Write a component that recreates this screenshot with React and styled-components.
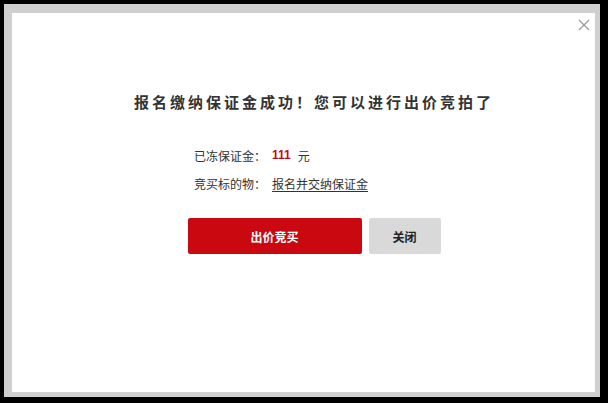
import React from "react";
import styled, { createGlobalStyle } from "styled-components";

const Global = createGlobalStyle`
  html, body { margin: 0; padding: 0; background: #000; }
  body { font-family: "Noto Sans CJK SC", "Liberation Sans", sans-serif; }
  #root { width: 608px; height: 403px; }
`;

const Frame = styled.div`
  box-sizing: border-box;
  position: relative;
  margin: 4px 8px 0 4px;
  width: 596px;
  height: 393px;
  background: #fff;
  border-style: solid;
  border-color: #cfcfcf;
  border-width: 9px 5px 5px 8px;
`;

const Close = styled.button`
  position: absolute;
  top: 4px;
  right: 3px;
  width: 16px;
  height: 16px;
  padding: 0;
  border: 0;
  background: transparent;
  display: flex;
  align-items: center;
  justify-content: center;
  cursor: pointer;
`;

const Content = styled.div`
  display: flex;
  flex-direction: column;
  align-items: center;
  padding: 79px 0 0 21px;
`;

const Title = styled.h2`
  margin: 0;
  font-size: 15px;
  line-height: 20px;
  font-weight: 700;
  letter-spacing: 3px;
  color: #333;
  white-space: nowrap;
`;

const Info = styled.div`
  width: 240px;
  margin-top: 29px;
  display: flex;
  flex-direction: column;
`;

const Row = styled.div`
  display: flex;
  align-items: center;
  height: 28px;
  font-size: 12px;
  color: #333;
  white-space: nowrap;
`;

const Price = styled.span`
  color: #c0091a;
  font-weight: 700;
  font-size: 12px;
  font-family: "Liberation Sans", sans-serif;
  margin: 0 7px 0 6px;
`;

const Link = styled.a`
  color: #333;
  margin-left: 6px;
  text-decoration: underline;
  text-underline-offset: 2px;
`;

const Buttons = styled.div`
  display: flex;
  gap: 7px;
  margin-top: 21px;
`;

const Button = styled.button`
  height: 36px;
  width: ${(p) => p.$w}px;
  border: 0;
  border-radius: 2px;
  font-family: "Noto Sans CJK SC", sans-serif;
  font-size: 12px;
  font-weight: 700;
  color: ${(p) => (p.$primary ? "#fff" : "#222")};
  background: ${(p) => (p.$primary ? "#c9080f" : "#d9d9d9")};
  cursor: pointer;
`;

export default function App() {
  return (
    <>
      <Global />
      <Frame>
        <Close aria-label="关闭">
          <svg width="12" height="12" viewBox="0 0 12 12">
            <path d="M1 1L11 11M11 1L1 11" stroke="#9a9a9a" strokeWidth="1.3" fill="none" />
          </svg>
        </Close>
        <Content>
          <Title>报名缴纳保证金成功！您可以进行出价竞拍了</Title>
          <Info>
            <Row>
              已冻保证金：<Price>111</Price>元
            </Row>
            <Row>
              竞买标的物：<Link href="#">报名并交纳保证金</Link>
            </Row>
          </Info>
          <Buttons>
            <Button $primary $w={174}>出价竞买</Button>
            <Button $w={72}>关闭</Button>
          </Buttons>
        </Content>
      </Frame>
    </>
  );
}
